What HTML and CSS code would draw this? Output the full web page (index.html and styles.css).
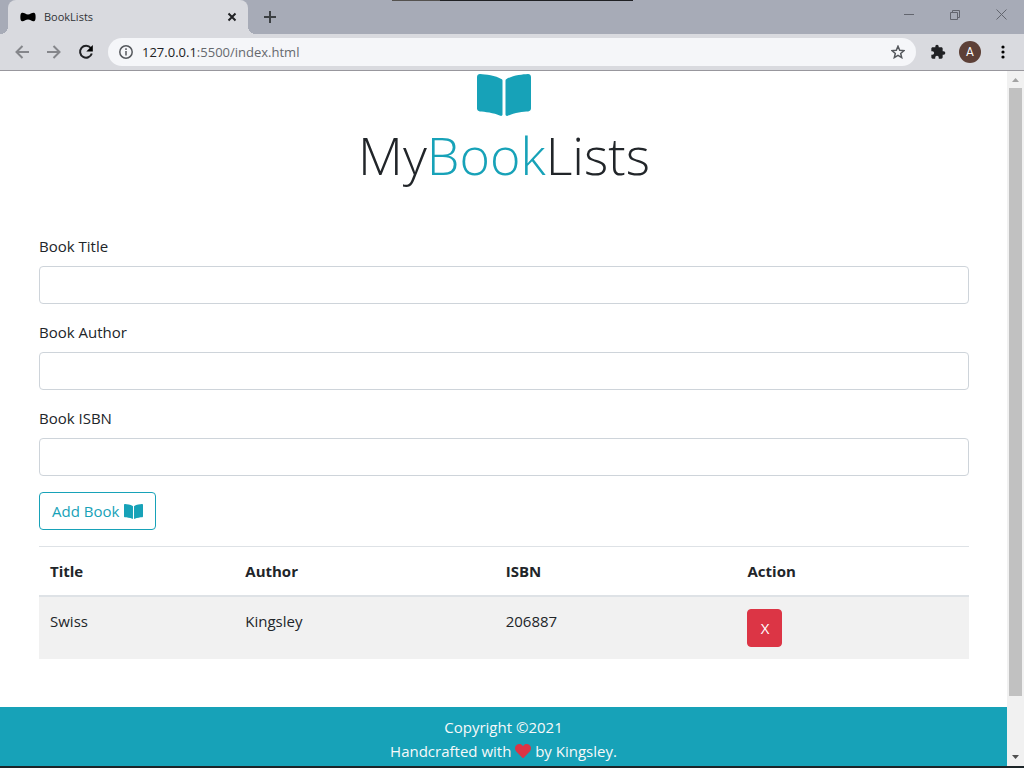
FILE: index.html
```html
<!DOCTYPE html>
<html lang="en">
<head>
<meta charset="utf-8">
<meta name="viewport" content="width=device-width, initial-scale=1">
<title>BookLists</title>
<link rel="stylesheet" href="styles.css">
</head>
<body>
<svg class="defs" aria-hidden="true">
  <symbol id="book" viewBox="0 0 576 512"><path d="M542.22 32.05c-54.8 3.11-163.72 14.43-230.96 55.59-4.64 2.84-7.27 7.89-7.27 13.17v363.87c0 11.55 12.63 18.85 23.28 13.49 69.18-34.82 169.23-44.32 218.7-46.92 16.89-.89 30.02-14.43 30.02-30.66V62.75c.01-17.71-15.35-31.74-33.77-30.7zM264.73 87.64C197.5 46.48 88.58 35.17 33.78 32.05 15.36 31.01 0 45.04 0 62.75V400.6c0 16.24 13.13 29.78 30.02 30.66 49.49 2.6 149.59 12.11 218.77 46.95 10.62 5.35 23.21-1.94 23.21-13.46V100.63c0-5.29-2.62-10.14-7.27-12.99z"/></symbol>
</svg>
<div class="window">
  <header class="browser">
    <div class="tabstrip">
      <div class="tab">
        <svg class="favicon" viewBox="0 0 16 10"><path d="M1.500 1C4 .2 5.500 2.500 8 2.500S12 .2 14.500 1c1.500.3 1.500 7.700 0 8C12 9.800 10.500 7.500 8 7.500S4 9.800 1.500 9C0 8.700 0 1.300 1.500 1z"/></svg>
        <span class="tab-title">BookLists</span>
        <button class="icon-btn" aria-label="Close tab"><svg width="10" height="10" viewBox="0 0 10 10"><path class="line dark" d="M1.500 1.500l7 7M8.500 1.500l-7 7"/></svg></button>
      </div>
      <button class="icon-btn new-tab" aria-label="New tab"><svg width="12" height="12" viewBox="0 0 12 12"><path class="line" d="M6 0v12M0 6h12"/></svg></button>
      <div class="window-controls">
        <button class="icon-btn" aria-label="Minimize"><svg width="10" height="11" viewBox="0 0 10 11"><path class="thin" d="M0 5.500h10"/></svg></button>
        <button class="icon-btn" aria-label="Restore"><svg width="10" height="10" viewBox="0 0 10 10"><path class="thin" d="M.5 2.500h7v7h-7zM2.500 2.500v-2h7v7h-2"/></svg></button>
        <button class="icon-btn" aria-label="Close"><svg width="11" height="11" viewBox="0 0 11 11"><path class="thin" d="M.5.5l10 10M10.500.5l-10 10"/></svg></button>
      </div>
      <div class="top-edge"></div>
    </div>
    <div class="toolbar">
      <button class="icon-btn nav" aria-label="Back"><svg width="14" height="14" viewBox="0 0 14 14"><path class="line muted" d="M14 7H1.500M7.500 1l-6 6 6 6"/></svg></button>
      <button class="icon-btn nav" aria-label="Forward"><svg width="14" height="14" viewBox="0 0 14 14"><path class="line muted" d="M0 7h12.500M6.500 1l6 6-6 6"/></svg></button>
      <button class="icon-btn nav" aria-label="Reload"><svg width="16" height="16" viewBox="0 0 16 16"><path class="line dark" d="M12.800 4A6 6 0 1 0 13.800 9.500"/><path d="M14.800 1v6.500H8.300z"/></svg></button>
      <div class="address">
        <svg width="14" height="14" viewBox="0 0 14 14"><circle class="info" cx="7" cy="7" r="6.200"/><path class="info" d="M7 6v4.500M7 3.300v1.600"/></svg>
        <span class="url">127.0.0.1<span class="path">:5500/index.html</span></span>
        <button class="icon-btn" aria-label="Bookmark this page"><svg width="14" height="14" viewBox="0 0 14 14"><path class="info" d="M7 1.200l1.700 4 4.300.4-3.300 2.800 1 4.200L7 10.400l-3.700 2.200 1-4.200L1 5.600l4.300-.4z"/></svg></button>
      </div>
      <button class="icon-btn ext" aria-label="Extensions"><svg width="16" height="16" viewBox="0 0 24 24"><path d="M20.500 11H19V7c0-1.100-.9-2-2-2h-4V3.500a2.500 2.500 0 0 0-5 0V5H4c-1.100 0-2 .9-2 2v3.800h1.500a2.700 2.700 0 0 1 0 5.400H2V20c0 1.100.9 2 2 2h3.800v-1.500a2.700 2.700 0 0 1 5.400 0V22H17c1.100 0 2-.9 2-2v-4h1.500a2.500 2.500 0 0 0 0-5z"/></svg></button>
      <button class="avatar" aria-label="Profile A">A</button>
      <button class="icon-btn menu" aria-label="Menu"><svg width="4" height="14" viewBox="0 0 4 14"><circle cx="2" cy="2" r="1.600"/><circle cx="2" cy="7" r="1.600"/><circle cx="2" cy="12" r="1.600"/></svg></button>
    </div>
  </header>
  <div class="viewport">
    <div class="page">
      <main class="container">
        <h1 class="brand"><svg class="brand-icon"><use href="#book"/></svg><span>My<span class="accent">Book</span>Lists</span></h1>
        <form class="book-form">
          <div class="field"><label for="title">Book Title</label><input type="text" id="title"></div>
          <div class="field"><label for="author">Book Author</label><input type="text" id="author"></div>
          <div class="field"><label for="isbn">Book ISBN</label><input type="text" id="isbn"></div>
          <button type="button" class="btn add">Add Book <svg class="btn-icon"><use href="#book"/></svg></button>
        </form>
        <table class="books">
          <colgroup><col class="c-title"><col class="c-author"><col class="c-isbn"><col></colgroup>
          <thead><tr><th>Title</th><th>Author</th><th>ISBN</th><th>Action</th></tr></thead>
          <tbody><tr><td>Swiss</td><td>Kingsley</td><td>206887</td><td><button type="button" class="btn delete">X</button></td></tr></tbody>
        </table>
      </main>
      <footer class="footer">
        <div>Copyright ©2021</div>
        <div>Handcrafted with <svg class="heart" viewBox="0 0 512 512"><path d="M462.300 62.600C407.500 15.900 326 24.300 275.700 76.200L256 96.500l-19.700-20.300C186.100 24.300 104.500 15.900 49.700 62.600c-62.800 53.600-66.100 149.800-9.900 207.900l193.500 199.800c12.500 12.900 32.800 12.900 45.300 0l193.500-199.800c56.300-58.100 53-154.300-9.800-207.900z"/></svg> by Kingsley.</div>
      </footer>
    </div>
    <div class="scrollbar">
      <svg width="7" height="4" viewBox="0 0 7 4"><path class="arrow-up" d="M0 4L3.500 0 7 4z"/></svg>
      <div class="track"><div class="thumb"></div></div>
      <svg width="7" height="4" viewBox="0 0 7 4"><path class="arrow-down" d="M0 0l3.500 4L7 0z"/></svg>
    </div>
  </div>
</div>
</body>
</html>
```
FILE: styles.css
```css
* { box-sizing: border-box; }
body {
  margin: 0;
  font: 15px/24px "Segoe UI", "Open Sans", "Noto Sans", sans-serif;
  color: #212529;
  background: #fff;
}
button, input { font: inherit; }
svg { flex: none; }
.defs { position: absolute; width: 0; height: 0; }
.window {
  display: flex;
  flex-direction: column;
  min-height: 100vh;
  border-bottom: 2px solid #1c2427;
}

/* browser frame */
.browser { background: #d9dadf; border-bottom: 1px solid #98979d; }
.tabstrip {
  position: relative;
  display: flex;
  height: 34px;
  padding-left: 8px;
  background: #a7abb7;
}
.tab {
  position: relative;
  display: flex;
  align-items: center;
  width: 240px;
  padding: 0 11px 0 12px;
  background: #d9dadf;
  border-radius: 8px 8px 0 0;
}
.tab::before, .tab::after {
  content: "";
  position: absolute;
  bottom: 0;
  width: 8px;
  height: 8px;
}
.tab::before { right: 100%; background: radial-gradient(circle at 0 0, #a7abb7 8px, #d9dadf 8px); }
.tab::after { left: 100%; background: radial-gradient(circle at 100% 0, #a7abb7 8px, #d9dadf 8px); }
.favicon { width: 16px; height: 10px; }
.tab-title { flex: 1; margin-left: 8px; font-size: 11px; color: #303236; }
.icon-btn {
  display: flex;
  align-items: center;
  justify-content: center;
  padding: 0;
  border: 0;
  background: none;
}
.new-tab { width: 44px; }
.window-controls { display: flex; height: 29px; margin-left: auto; }
.window-controls .icon-btn { width: 46px; }
.top-edge {
  position: absolute;
  top: 0;
  left: 392px;
  width: 241px;
  height: 1px;
  background: linear-gradient(90deg, #55524f 48px, #202124 48px);
}
.line { fill: none; stroke: #3c4043; stroke-width: 2; }
.line.dark { stroke: #202124; }
.line.muted { stroke: #85868b; }
.thin { fill: none; stroke: #62656e; }
.info { fill: none; stroke: #55585d; stroke-width: 1.5px; }
.toolbar { display: flex; align-items: center; height: 36px; padding: 0 5px 0 6px; }
.nav { width: 32px; height: 32px; }
.address {
  display: flex;
  align-items: center;
  flex: 1;
  height: 28px;
  margin-left: 6px;
  padding: 0 11px;
  border-radius: 14px;
  background: #f5f6f9;
}
.url { flex: 1; margin-left: 9px; font-size: 13px; color: #202124; }
.path { color: #66696e; }
.ext { width: 43px; height: 32px; fill: #202124; }
.avatar {
  width: 22px;
  height: 22px;
  padding: 0;
  border: 0;
  border-radius: 50%;
  background: #5d4037;
  color: #fff;
  font-family: Roboto, sans-serif;
  font-size: 12px;
  line-height: 22px;
}
.menu { width: 32px; height: 32px; margin-left: 6px; }

/* page */
.viewport { display: flex; flex: 1; }
.page { display: flex; flex: 1; flex-direction: column; }
.container { flex: 1; padding: 0 38px 48px 39px; }
.brand {
  display: flex;
  flex-direction: column;
  align-items: center;
  margin: 0;
  font-size: 52px;
  font-weight: 300;
  line-height: 72px;
}
.brand-icon { width: 56px; height: 48px; fill: #17a2b8; }
.accent { color: #17a2b8; }
.book-form { margin-top: 43px; }
.field { margin-bottom: 16px; }
.field label { display: block; margin-bottom: 8px; }
.field input {
  display: block;
  width: 100%;
  height: 38px;
  padding: 6px 12px;
  border: 1px solid #ced4da;
  border-radius: 4px;
  background: #fff;
}
.btn { height: 38px; padding: 0 12px; border: 1px solid; border-radius: 4px; }
.add {
  display: flex;
  align-items: center;
  gap: 5px;
  padding: 0 12px;
  border-color: #17a2b8;
  background: #fff;
  color: #17a2b8;
}
.btn-icon { width: 19px; height: 17px; fill: #17a2b8; }
.books { width: 100%; margin-top: 16px; border-collapse: collapse; table-layout: fixed; }
.c-title { width: 21%; }
.c-author { width: 28%; }
.c-isbn { width: 26%; }
.books th, .books td {
  padding: 12px 11px;
  border-top: 1px solid #dee2e6;
  text-align: left;
  vertical-align: top;
}
.books th { border-bottom: 2px solid #dee2e6; font-weight: 700; }
.books td { background: #f1f1f1; }
.delete { display: block; width: 35px; padding: 0; border-color: #dc3545; background: #dc3545; color: #fff; }
.footer { padding: 8px 0 3px; background: #17a2b8; color: #f8f9fa; text-align: center; }
.heart { width: 16px; height: 16px; fill: #dc3545; vertical-align: -2px; }
.scrollbar {
  display: flex;
  flex-direction: column;
  align-items: center;
  width: 17px;
  padding: 7px 2px;
  background: #f1f1f1;
}
.track { flex: 1; width: 13px; margin: 6px 0; }
.thumb { height: 92%; background: #c1c1c1; }
.arrow-up { fill: #a3a3a3; }
.arrow-down { fill: #505050; }
```
